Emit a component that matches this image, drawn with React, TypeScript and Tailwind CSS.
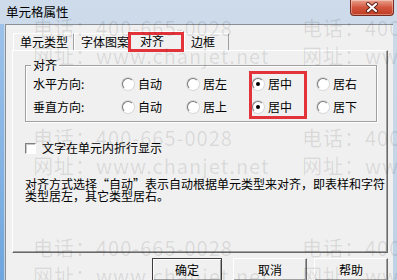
import React from "react";

const Radio = ({ label, checked = false }: { label: string; checked?: boolean }) => {
  return (
    <div className="flex w-[65px] shrink-0 items-center">
      <span className="flex h-[12px] w-[12px] items-center justify-center rounded-full border border-t-[#7a7a7a] border-l-[#7a7a7a] border-r-[#ffffff] border-b-[#ffffff] bg-white shadow-[0_0_0_1px_#d8d8d8]">
        {checked && <span className="h-[4px] w-[4px] rounded-full bg-black" />}
      </span>
      <span className="ml-[4px]">{label}</span>
    </div>
  );
};

const Tab = ({ label, w, active = false }: { label: string; w: string; active?: boolean }) => {
  if (active) {
    return (
      <div
        className={`relative z-10 -mb-px flex h-[20px] ${w} items-start border-l border-t border-r border-l-white border-t-white border-r-[#696969] bg-[#f0f0f0] pl-[9px] pt-[2px]`}
      >
        {label}
      </div>
    );
  }
  return (
    <div
      className={`flex h-[17px] ${w} items-start border-l border-t border-r border-l-white border-t-white border-r-[#a0a0a0] bg-[#f0f0f0] pl-[6px] pt-[1px]`}
    >
      {label}
    </div>
  );
};

const Button = ({ label, w, primary = false }: { label: string; w: string; primary?: boolean }) => {
  return (
    <div
      className={`flex h-[23px] ${w} items-start justify-center border pt-[4px] ${
        primary
          ? "border-[#3c3c3c] shadow-[inset_1px_1px_0_#ffffff,inset_-1px_-1px_0_#a0a0a0]"
          : "border-t-white border-l-white border-r-[#696969] border-b-[#696969] shadow-[inset_-1px_-1px_0_#a0a0a0]"
      } bg-[#f0f0f0]`}
    >
      {label}
    </div>
  );
};

const Watermark = () => {
  const blocks = [0, 1, 2];
  return (
    <div className="pointer-events-none absolute inset-0 z-30 flex flex-col pl-[33px] pt-[16px] font-['Noto_Sans_CJK_SC',sans-serif] text-[20px] leading-[24px] tracking-[1px] text-black/10">
      {blocks.map((b) => (
        <div key={b} className="flex h-[110px] shrink-0 flex-col">
          <div className="flex h-[28px]">
            <span className="w-[269px] shrink-0 whitespace-nowrap">电话：400-665-0028</span>
            <span className="shrink-0 whitespace-nowrap">电话：400-665-0028</span>
          </div>
          <div className="flex">
            <span className="w-[269px] shrink-0 whitespace-nowrap">网址：www.chanjet.net</span>
            <span className="shrink-0 whitespace-nowrap">网址：www.chanjet.net</span>
          </div>
        </div>
      ))}
    </div>
  );
};

const App = () => {
  return (
    <div className="relative h-[280px] w-[397px] overflow-hidden bg-gradient-to-b from-[#cddbea] to-[#bfd1e5] font-['Noto_Sans_CJK_SC',sans-serif] text-[12px] leading-[14px] text-black">
      {/* left frame strip */}
      <div className="absolute bottom-0 left-0 top-[24px] w-[4px] bg-gradient-to-b from-[#9cc2ea] to-[#6fa6de]" />

      {/* Title bar */}
      <div className="flex h-[24px] items-start justify-between pl-[6px] pr-[3px]">
        <span className="mt-[5px] text-[12.5px] leading-[14px]">单元格属性</span>
        <div className="flex h-[16px] w-[44px] items-center justify-center rounded-b-[4px] border border-t-0 border-[#7d2a1e] bg-gradient-to-b from-[#e8a08e] via-[#d2553d] to-[#c03a22] shadow-[inset_0_0_0_1px_rgba(255,255,255,0.35)]">
          <svg width="14" height="11" viewBox="0 0 14 11">
            <path d="M3 2 L11 9 M11 2 L3 9" stroke="#5a2018" strokeWidth="4" strokeLinecap="round" />
            <path d="M3 2 L11 9 M11 2 L3 9" stroke="#ffffff" strokeWidth="2.2" strokeLinecap="round" />
          </svg>
        </div>
      </div>

      {/* Client area */}
      <div className="ml-[5px] mr-[4px] flex h-[256px] flex-col border-l border-t border-[#8a8f96] bg-[#f0f0f0]">
        <div className="ml-[6px] mt-[6px] flex flex-col">
          {/* Tabs */}
          <div className="flex h-[19px] items-end pl-[1px]">
            <Tab label="单元类型" w="w-[61px]" />
            <Tab label="字体图案" w="w-[56px]" />
            <Tab label="对齐" w="w-[54px]" active />
            <Tab label="边框" w="w-[45px]" />
          </div>

          {/* Page */}
          <div className="relative flex h-[203px] w-[376px] flex-col border border-l-white border-t-white border-r-[#696969] border-b-[#696969] shadow-[inset_-1px_-1px_0_#a0a0a0]">
            {/* Group box */}
            <div className="relative ml-[12px] mt-[14px] flex h-[57px] w-[352px] flex-col border border-[#a0a0a0] pl-[7px] pt-[10px] shadow-[inset_1px_1px_0_#ffffff,1px_1px_0_#ffffff]">
              <span className="absolute -top-[8px] left-[5px] bg-[#f0f0f0] px-[2px]">对齐</span>
              <div className="flex h-[16px] items-center">
                <span className="w-[89px] shrink-0">水平方向:</span>
                <Radio label="自动" />
                <Radio label="居左" />
                <Radio label="居中" checked />
                <Radio label="居右" />
              </div>
              <div className="mt-[7px] flex h-[16px] items-center">
                <span className="w-[89px] shrink-0">垂直方向:</span>
                <Radio label="自动" />
                <Radio label="居上" />
                <Radio label="居中" checked />
                <Radio label="居下" />
              </div>
              {/* red annotation box */}
              <div className="pointer-events-none absolute left-[223px] top-[5px] h-[48px] w-[58px] border-[3px] border-[#e2333a]" />
            </div>

            {/* Checkbox */}
            <div className="ml-[12px] mt-[19px] flex h-[14px] items-center">
              <span className="h-[11px] w-[11px] border border-t-[#808080] border-l-[#808080] border-r-white border-b-white bg-white shadow-[inset_1px_1px_0_#c8c8c8]" />
              <span className="ml-[6px]">文字在单元内折行显示</span>
            </div>

            {/* Description */}
            <p className="ml-[12px] mt-[23px] whitespace-nowrap leading-[12px]">
              对齐方式选择“自动”表示自动根据单元类型来对齐，即表样和字符
              <br />
              类型居左，其它类型居右。
            </p>
          </div>

          {/* Red annotation around active tab */}
          <div className="pointer-events-none absolute left-[128px] top-[32px] z-20 h-[20px] w-[56px] border-[3px] border-[#e2333a]" />

          {/* Buttons */}
          <div className="mt-[5px] flex w-[376px] justify-end">
            <Button label="确定" w="w-[70px]" primary />
            <div className="w-[11px]" />
            <Button label="取消" w="w-[74px]" />
            <div className="w-[7px]" />
            <Button label="帮助" w="w-[74px]" />
          </div>
        </div>
      </div>

      <Watermark />
    </div>
  );
};

export default App;
